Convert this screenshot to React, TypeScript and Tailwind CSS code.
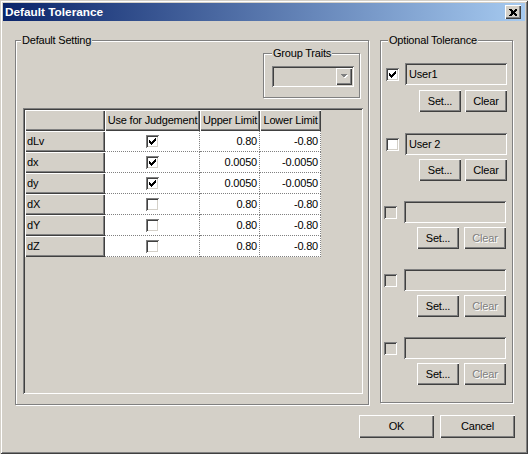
import React from 'react';

const raised = 'shadow-[inset_1px_1px_0_#fff,inset_-1px_-1px_0_#404040,inset_-2px_-2px_0_#808080]';
const sunken =
  'shadow-[inset_1px_1px_0_#808080,inset_-1px_-1px_0_#fff,inset_2px_2px_0_#404040,inset_-2px_-2px_0_#d4d0c8]';
const etched = 'border border-[#808080] shadow-[1px_1px_0_#fff,inset_1px_1px_0_#fff]';
const disabledText = 'text-[#808080] [text-shadow:1px_1px_0_#fff]';

const rows = [
  { name: 'dLv', use: true, up: '0.80', lo: '-0.80' },
  { name: 'dx', use: true, up: '0.0050', lo: '-0.0050' },
  { name: 'dy', use: true, up: '0.0050', lo: '-0.0050' },
  { name: 'dX', use: false, up: '0.80', lo: '-0.80' },
  { name: 'dY', use: false, up: '0.80', lo: '-0.80' },
  { name: 'dZ', use: false, up: '0.80', lo: '-0.80' },
];

// classic 7x7 check mark, drawn pixel by pixel
const checkPixels = [
  '......#',
  '.....##',
  '#...###',
  '##.###.',
  '#####..',
  '.###...',
  '..#....',
];

const CheckMark: React.FC = () => (
  <svg width="7" height="7" viewBox="0 0 7 7" shapeRendering="crispEdges">
    {checkPixels.flatMap((line, y) =>
      line.split('').map((c, x) => (c === '#' ? <rect key={`${x}-${y}`} x={x} y={y} width="1" height="1" fill="#000" /> : null))
    )}
  </svg>
);

const Check: React.FC<{ checked?: boolean; disabled?: boolean; className?: string }> = ({ checked, disabled, className }) => (
  <div
    className={`w-[13px] h-[13px] shrink-0 flex items-center justify-center ${sunken} ${
      disabled ? 'bg-[#d4d0c8]' : 'bg-white'
    } ${className || ''}`}
  >
    {checked && <CheckMark />}
  </div>
);

const Btn: React.FC<{ label: string; disabled?: boolean; className?: string }> = ({ label, disabled, className }) => (
  <div
    className={`flex items-center justify-center bg-[#d4d0c8] ${raised} ${disabled ? disabledText : ''} ${className || ''}`}
  >
    {label}
  </div>
);

const Legend: React.FC<{ text: string; className?: string }> = ({ text, className }) => (
  <div className={`-mt-[7px] w-fit px-[1px] leading-[13px] bg-[#d4d0c8] ${className || ''}`}>{text}</div>
);

const OptRow: React.FC<{ name: string; enabled: boolean; checked?: boolean; mt: string; btnMt: string }> = ({
  name,
  enabled,
  checked,
  mt,
  btnMt,
}) => (
  <div className={mt}>
    <div className="flex items-center">
      <Check checked={checked} disabled={!enabled} className={enabled ? 'ml-[5px] mt-[1px]' : 'ml-[3px] mt-[1px]'} />
      <div className={`${enabled ? 'ml-[6px]' : 'ml-[7px]'} w-[102px] h-[22px] pl-[4px] flex items-center ${sunken}`}>
        {name}
      </div>
    </div>
    <div className={`flex ${btnMt} ${enabled ? 'ml-[38px] gap-[4px]' : 'ml-[36px] gap-[5px]'}`}>
      <Btn label="Set..." className="w-[42px] h-[22px]" />
      <Btn label="Clear" disabled={!enabled} className="w-[42px] h-[22px]" />
    </div>
  </div>
);

const App: React.FC = () => {
  return (
    <div className="w-[528px] h-[454px] bg-[#d4d0c8] p-[3px] flex flex-col text-[11px] tracking-[-0.2px] text-black font-['Liberation_Sans',Arial,sans-serif] shadow-[inset_1px_1px_0_#d4d0c8,inset_-1px_-1px_0_#404040,inset_2px_2px_0_#fff,inset_-2px_-2px_0_#808080]">
      {/* title bar */}
      <div className="h-[18px] flex items-center pl-[2px] pr-[4px] bg-[linear-gradient(to_right,#0a246a,#a6caf0)]">
        <div className="flex-1 font-bold text-white text-[11.8px] tracking-normal leading-[18px]">Default Tolerance</div>
        <div className={`w-[16px] h-[14px] bg-[#d4d0c8] flex items-center justify-center ${raised}`}>
          <svg width="8" height="7" viewBox="0 0 8 7" shapeRendering="crispEdges">
            <path d="M0 0h2l2 2 2-2h2v1L6 3v1l2 2v1H6L4 5 2 7H0V6l2-2V3L0 1z" fill="#000" />
          </svg>
        </div>
      </div>

      {/* body */}
      <div className="flex-1 flex flex-col">
        <div className="flex items-start pl-[12px] pt-[19px]">
          {/* Default Setting */}
          <div className={`w-[354px] h-[365px] flex flex-col ${etched}`}>
            <Legend text="Default Setting" className="ml-[5px]" />
            <div className={`ml-[247px] mt-[6px] w-[97px] h-[45px] flex flex-col ${etched}`}>
              <Legend text="Group Traits" className="ml-[8px]" />
              <div className={`ml-[8px] mt-[6px] w-[82px] h-[21px] bg-[#d4d0c8] flex items-center justify-end pr-[2px] ${sunken}`}>
                <div className={`w-[16px] h-[17px] bg-[#d4d0c8] flex items-center justify-center ${raised}`}>
                  <svg width="8" height="5" viewBox="0 0 8 5" shapeRendering="crispEdges">
                    <path d="M1 1h7L4.5 4.5z" fill="#fff" />
                    <path d="M0 0h7L3.5 3.5z" fill="#808080" />
                  </svg>
                </div>
              </div>
            </div>

            {/* grid */}
            <div className={`ml-[7px] mt-[10px] w-[340px] h-[286px] p-[2px] bg-[#d4d0c8] ${sunken}`}>
              <div className="flex">
                <div className={`w-[80px] h-[21px] ${raised}`} />
                <div className={`w-[95px] h-[21px] flex items-center justify-center whitespace-nowrap ${raised}`}>Use for Judgement</div>
                <div className={`w-[60px] h-[21px] flex items-center justify-center whitespace-nowrap ${raised}`}>Upper Limit</div>
                <div className={`w-[61px] h-[21px] flex items-center justify-center whitespace-nowrap ${raised}`}>Lower Limit</div>
              </div>
              {rows.map((r) => (
                <div key={r.name} className="flex">
                  <div className={`w-[80px] h-[21px] flex items-center pl-[2px] ${raised}`}>{r.name}</div>
                  <div className="w-[95px] h-[21px] flex items-center justify-center bg-white border-r border-b border-dotted border-[#808080]">
                    <Check checked={r.use} />
                  </div>
                  <div className="w-[60px] h-[21px] flex items-center justify-end pr-[2px] bg-white border-r border-b border-dotted border-[#808080]">
                    {r.up}
                  </div>
                  <div className="w-[61px] h-[21px] flex items-center justify-end pr-[2px] bg-white border-r border-b border-dotted border-[#808080]">
                    {r.lo}
                  </div>
                </div>
              ))}
            </div>
          </div>

          {/* Optional Tolerance */}
          <div className={`ml-[11px] w-[133px] h-[363px] flex flex-col ${etched}`}>
            <Legend text="Optional Tolerance" className="ml-[7px]" />
            <OptRow name="User1" enabled checked mt="mt-[16px]" btnMt="mt-[5px]" />
            <OptRow name="User 2" enabled mt="mt-[21px]" btnMt="mt-[4px]" />
            <OptRow name="" enabled={false} mt="mt-[20px]" btnMt="mt-[4px]" />
            <OptRow name="" enabled={false} mt="mt-[20px]" btnMt="mt-[4px]" />
            <OptRow name="" enabled={false} mt="mt-[20px]" btnMt="mt-[4px]" />
          </div>
        </div>

        <div className="flex justify-end gap-[6px] pr-[10px] mt-[10px]">
          <Btn
            label="OK"
            className="w-[75px] h-[23px] shadow-[inset_0_0_0_1px_#000,inset_2px_2px_0_#fff,inset_-2px_-2px_0_#404040,inset_-3px_-3px_0_#808080]"
          />
          <Btn label="Cancel" className="w-[75px] h-[23px]" />
        </div>
      </div>
    </div>
  );
};

export default App;
